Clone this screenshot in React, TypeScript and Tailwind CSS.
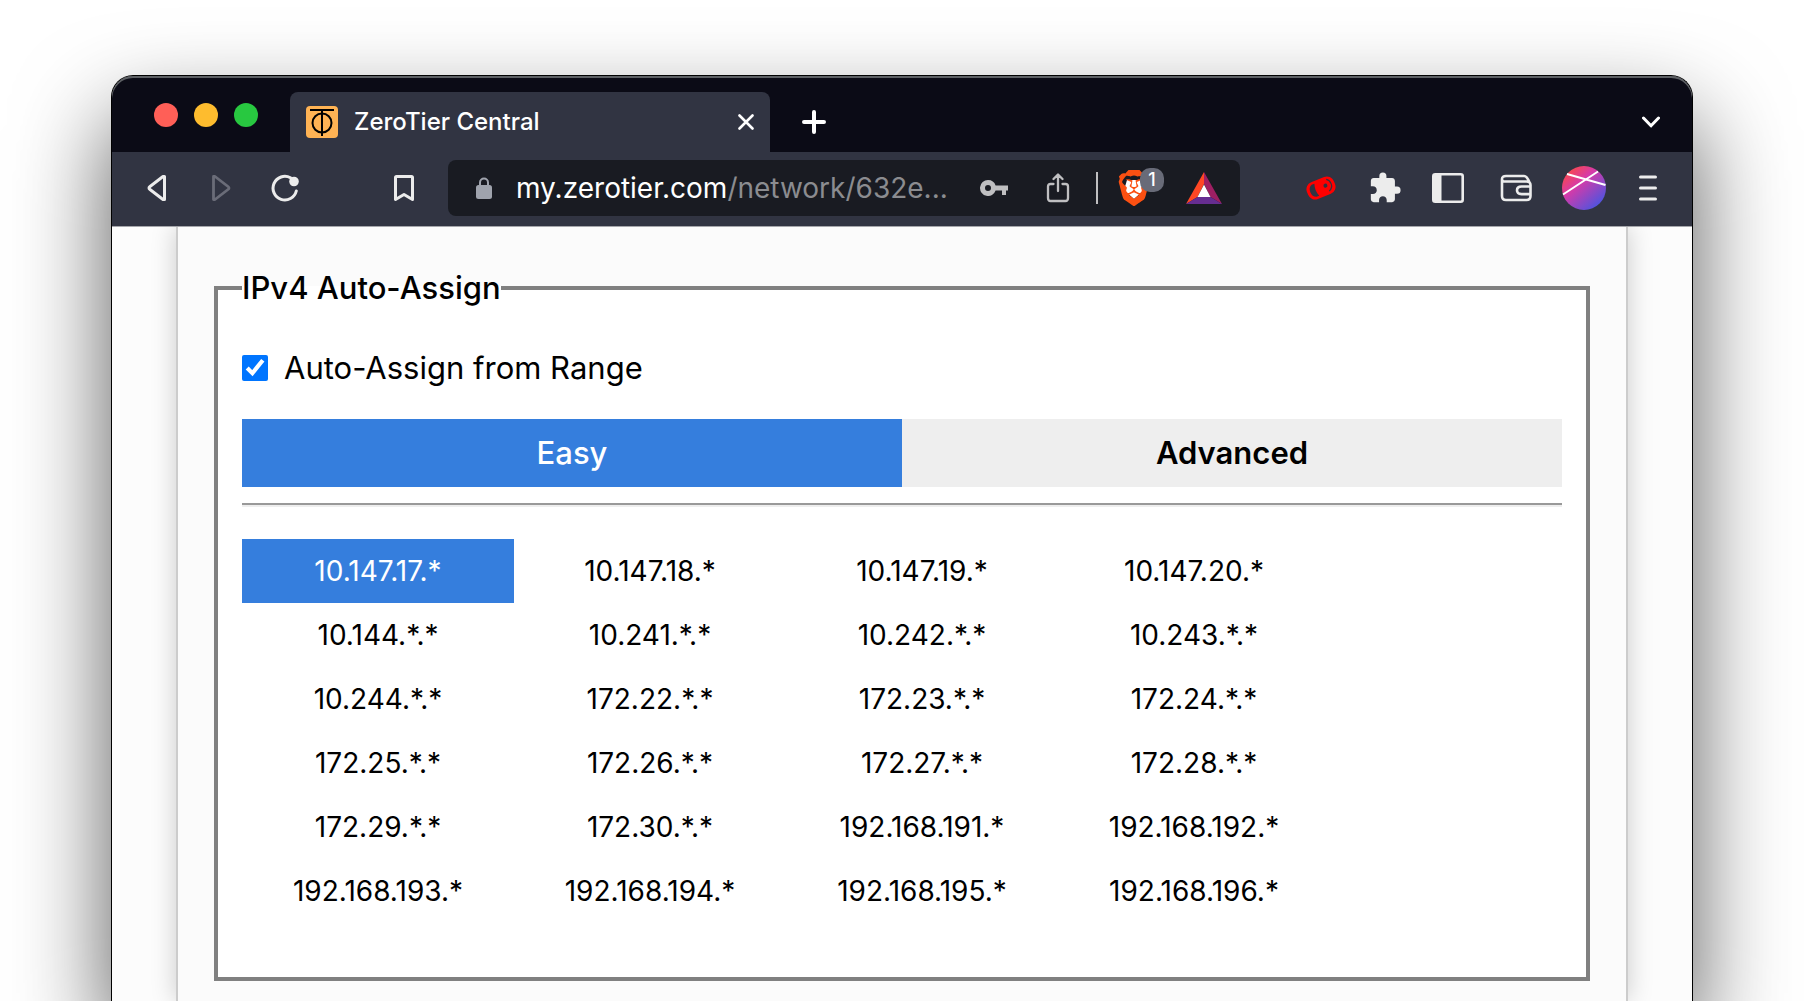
import { SiBrave } from "react-icons/si";
import { MdExtension } from "react-icons/md";
import type { ReactNode } from "react";

const ranges = [
  "10.147.17.*", "10.147.18.*", "10.147.19.*", "10.147.20.*",
  "10.144.*.*", "10.241.*.*", "10.242.*.*", "10.243.*.*",
  "10.244.*.*", "172.22.*.*", "172.23.*.*", "172.24.*.*",
  "172.25.*.*", "172.26.*.*", "172.27.*.*", "172.28.*.*",
  "172.29.*.*", "172.30.*.*", "192.168.191.*", "192.168.192.*",
  "192.168.193.*", "192.168.194.*", "192.168.195.*", "192.168.196.*",
];

function IconButton({ label, className = "", children }: { label: string; className?: string; children: ReactNode }) {
  return (
    <button type="button" aria-label={label} className={`flex shrink-0 items-center justify-center ${className}`}>
      {children}
    </button>
  );
}

function TabBar() {
  return (
    <header className="flex h-[76px] items-end rounded-t-[21px] bg-[#0b0b16] pr-8 pl-[42px] shadow-[inset_0_2px_0_#5d6064]">
      <div className="flex gap-4 self-start pt-[27px]">
        <button type="button" aria-label="Close window" className="size-6 rounded-full bg-[#ff5f57]" />
        <button type="button" aria-label="Minimize window" className="size-6 rounded-full bg-[#febc2e]" />
        <button type="button" aria-label="Zoom window" className="size-6 rounded-full bg-[#28c840]" />
      </div>
      <div className="ml-8 flex h-[60px] w-[480px] items-center rounded-t-lg bg-[#313442] px-4">
        <svg viewBox="0 0 32 32" className="size-8 shrink-0" fill="none" stroke="#000" strokeWidth="2">
          <rect width="32" height="32" rx="4" fill="#ffb354" stroke="none" />
          <path d="M4 4h24M16 4v26" />
          <circle cx="16" cy="17" r="9.5" />
        </svg>
        <span className="ml-4 flex-1 text-2xl font-medium text-white">ZeroTier Central</span>
        <IconButton label="Close tab">
          <svg viewBox="0 0 16 16" className="size-4" stroke="#fff" strokeWidth="2.6" strokeLinecap="round">
            <path d="M1.5 1.5l13 13M14.5 1.5l-13 13" />
          </svg>
        </IconButton>
      </div>
      <div className="flex h-[60px] flex-1 items-center justify-between pl-8">
        <IconButton label="New tab">
          <svg viewBox="0 0 24 24" className="size-6" stroke="#fff" strokeWidth="4" strokeLinecap="round">
            <path d="M2 12h20M12 2v20" />
          </svg>
        </IconButton>
        <IconButton label="Search tabs">
          <svg viewBox="0 0 18 12" className="h-3 w-[18px]" fill="none" stroke="#fff" strokeWidth="3" strokeLinecap="round" strokeLinejoin="round">
            <path d="M1.5 2L9 9.800l7.500-7.800" />
          </svg>
        </IconButton>
      </div>
    </header>
  );
}

function Toolbar() {
  return (
    <nav className="flex h-[75px] items-center border-b border-[#a5a6ab] bg-[#313442] pr-[35px] pb-0.5 pl-[35px] text-[#ececec]">
      <IconButton label="Back">
        <svg viewBox="0 0 20 28" className="h-7 w-5" fill="none" stroke="currentColor" strokeWidth="3" strokeLinejoin="round">
          <path d="M17.500 2.500v23h-1.500L3 15.500q-2-1.500 0-3L16 2.500z" />
        </svg>
      </IconButton>
      <IconButton label="Forward" className="ml-11 text-[#6a6c78]">
        <svg viewBox="0 0 20 28" className="h-7 w-5" fill="none" stroke="currentColor" strokeWidth="2.800" strokeLinejoin="round">
          <path d="M2.500 2.500v23H4l13-10q2-1.500 0-3L4 2.500z" />
        </svg>
      </IconButton>
      <IconButton label="Reload" className="ml-10">
        <svg viewBox="0 0 28 28" className="size-7" fill="none" stroke="currentColor" strokeWidth="3">
          <path d="M19.500 3.800A11.800 11.800 0 1 0 25.300 17" strokeLinecap="round" />
          <circle cx="23" cy="7.500" r="4.800" fill="currentColor" stroke="none" />
        </svg>
      </IconButton>
      <IconButton label="Bookmark this page" className="ml-[95px]">
        <svg viewBox="0 0 20 28" className="h-7 w-5" fill="none" stroke="currentColor" strokeWidth="3" strokeLinejoin="round">
          <path d="M1.500 3.500q0-1 1-1h15q1 0 1 1v22L10 20.500 1.500 25.500z" />
        </svg>
      </IconButton>
      <div className="ml-[34px] flex h-14 w-[792px] items-center rounded-lg bg-[#191b22] pr-[18px] pl-7">
        <svg viewBox="0 0 16 22" className="h-[22px] w-4 shrink-0 text-[#9fa3ad]">
          <path d="M4 9V5.500a4 4 0 0 1 8 0V9" fill="none" stroke="currentColor" strokeWidth="2" />
          <rect y="8" width="16" height="14" rx="2.500" fill="currentColor" />
        </svg>
        <div className="ml-6 flex-1 text-[28px] whitespace-nowrap text-white">
          my.zerotier.com<span className="text-[#8b8c90]">/network/632e...</span>
        </div>
        <IconButton label="Passwords" className="text-[#bfbfc1]">
          <svg viewBox="0 0 28 16" className="h-4 w-7" fill="currentColor">
            <path fillRule="evenodd" d="M8 0a8 8 0 0 1 7.600 5.500H28v5h-2V15h-4v-4.500h-6.400A8 8 0 1 1 8 0zM8 5a3 3 0 1 0 0 6 3 3 0 0 0 0-6z" />
          </svg>
        </IconButton>
        <IconButton label="Share" className="ml-[38px] text-[#bfbfc1]">
          <svg viewBox="0 0 24 30" className="h-[30px] w-6" fill="none" stroke="currentColor" strokeWidth="2.300" strokeLinecap="round" strokeLinejoin="round">
            <path d="M7.500 11H4.500Q2 11 2 13.500v11.500Q2 28 4.500 28h15q2.500 0 2.500-3v-11.500Q22 11 19.500 11h-3M12 18V2M7.500 6L12 1.500 16.500 6" />
          </svg>
        </IconButton>
        <span className="ml-[26px] h-8 w-0.5 bg-[#bfbfc1]" />
        <IconButton label="Brave Shields" className="relative ml-[22px]">
          <svg viewBox="0 0 28 36" className="h-9 w-7">
            <path d="M7 10h14l3 10-10 9L4 20z" fill="#fff" />
          </svg>
          <SiBrave className="absolute size-9 text-[#fb5012]" />
          <span className="absolute -top-0.5 left-5 flex size-6 items-center justify-center rounded-[10px] bg-[#686b78] text-lg font-medium text-white">1</span>
        </IconButton>
        <IconButton label="Brave Rewards" className="ml-[38px]">
          <svg viewBox="0 0 36 32" className="h-8 w-9">
            <path d="M18 0v12L11.500 25 0 32z" fill="#ff4724" />
            <path d="M18 0v12l6.500 13L36 32z" fill="#9e1f63" />
            <path d="M0 32h36l-11.500-7h-13z" fill="#662d91" />
            <path d="M18 12.500L24.500 25h-13z" fill="#fff" />
          </svg>
        </IconButton>
      </div>
      <div className="flex flex-1 items-center justify-end">
        <IconButton label="Pill extension">
          <svg viewBox="0 0 30 26" className="h-[26px] w-[30px]">
            <g transform="rotate(-22 15 13)">
              <rect x="0.500" y="4" width="29" height="18" rx="7.500" fill="#f00" />
              <path d="M10.500 6.500q-2.500 6.500 0 13H7.500q-4-1.500-4-6.500t4-6.500z" fill="#313442" />
              <circle cx="20" cy="12.500" r="2" fill="#313442" />
              <path d="M23 7q3 2 3 6t-4.500 6" fill="none" stroke="#313442" strokeWidth="1.200" />
            </g>
          </svg>
        </IconButton>
        <IconButton label="Extensions" className="ml-8">
          <MdExtension className="size-[34px]" />
        </IconButton>
        <IconButton label="Sidebar" className="ml-[30px]">
          <svg viewBox="0 0 32 30" className="h-[30px] w-8">
            <rect x="1.300" y="1.300" width="29.400" height="27.400" rx="2" fill="none" stroke="currentColor" strokeWidth="2.600" />
            <path d="M1 1h8.500v28H1z" fill="currentColor" />
          </svg>
        </IconButton>
        <IconButton label="Wallet" className="ml-9">
          <svg viewBox="0 0 32 28" className="h-7 w-8" fill="none" stroke="currentColor" strokeWidth="2.600" strokeLinejoin="round">
            <path d="M2 5v17q0 4 4 4h20.500q4 0 4-4V11q0-3.500-4-3.500H5Q2 7.500 2 5q0-3 4-3h18q3 0 5.500 6.500M30 12.500h-8.500q-4.500 0-4.500 3.800t4.500 3.800H30" />
          </svg>
        </IconButton>
        <IconButton label="Profile" className="ml-[30px]">
          <svg viewBox="0 0 44 44" className="size-11">
            <defs>
              <linearGradient id="avatar" x1="0.150" y1="0.100" x2="0.850" y2="0.900">
                <stop offset="0" stopColor="#f9484f" />
                <stop offset="0.350" stopColor="#d63aa8" />
                <stop offset="1" stopColor="#4c54e0" />
              </linearGradient>
            </defs>
            <circle cx="22" cy="22" r="22" fill="url(#avatar)" />
            <path d="M5 8l38.500 11M1 28.500L36 5.500" stroke="#fff" strokeWidth="2" />
          </svg>
        </IconButton>
        <IconButton label="Menu" className="ml-[33px]">
          <svg viewBox="0 0 18 26" className="h-[26px] w-[18px]" stroke="currentColor" strokeWidth="3" strokeLinecap="round">
            <path d="M1.500 2h15M1.500 13h15M1.500 24h15" />
          </svg>
        </IconButton>
      </div>
    </nav>
  );
}

function AutoAssign() {
  return (
    <fieldset className="border-4 border-[#808080] bg-white px-6 pb-[54px]">
      <legend className="text-[31px] leading-9 font-medium">IPv4 Auto-Assign</legend>
      <label className="mt-11 flex items-center gap-4 text-[31px] leading-9">
        <input type="checkbox" defaultChecked className="size-[26px] accent-[#0075ff]" />
        Auto-Assign from Range
      </label>
      <div className="mt-[33px] grid grid-cols-2 text-[31px] leading-9">
        <button type="button" className="h-[68px] bg-[#357edd] font-medium text-white">Easy</button>
        <button type="button" className="h-[68px] bg-[#eeeeee] font-semibold">Advanced</button>
      </div>
      <hr className="mt-4 border-t-2 border-b-2 border-t-[#999] border-b-[#eee]" />
      <div className="mt-8 grid w-[1088px] max-w-full grid-cols-4 text-[28px] leading-8">
        {ranges.map((range, i) => (
          <button key={range} type="button" className={i === 0 ? "h-16 bg-[#357edd] text-white" : "h-16"}>
            {range}
          </button>
        ))}
      </div>
    </fieldset>
  );
}

export default function App() {
  return (
    <div className="flex min-h-screen flex-col overflow-hidden bg-white px-[111px] pt-[75px] font-['Inter',sans-serif] text-black">
      <div className="flex flex-1 flex-col rounded-t-[22px] border border-b-0 border-black shadow-[0_45px_95px_rgba(0,0,0,0.66)]">
        <TabBar />
        <Toolbar />
        <main className="flex flex-1 flex-col bg-[#fcfcfc] px-16">
          <section className="flex-1 border-x-2 border-[#ccc] bg-[#fbfbfb] px-9 pt-[43px] pb-5 shadow-[0_0_24px_rgba(0,0,0,0.2)] [clip-path:inset(0_-40px)]">
            <AutoAssign />
          </section>
        </main>
      </div>
    </div>
  );
}
